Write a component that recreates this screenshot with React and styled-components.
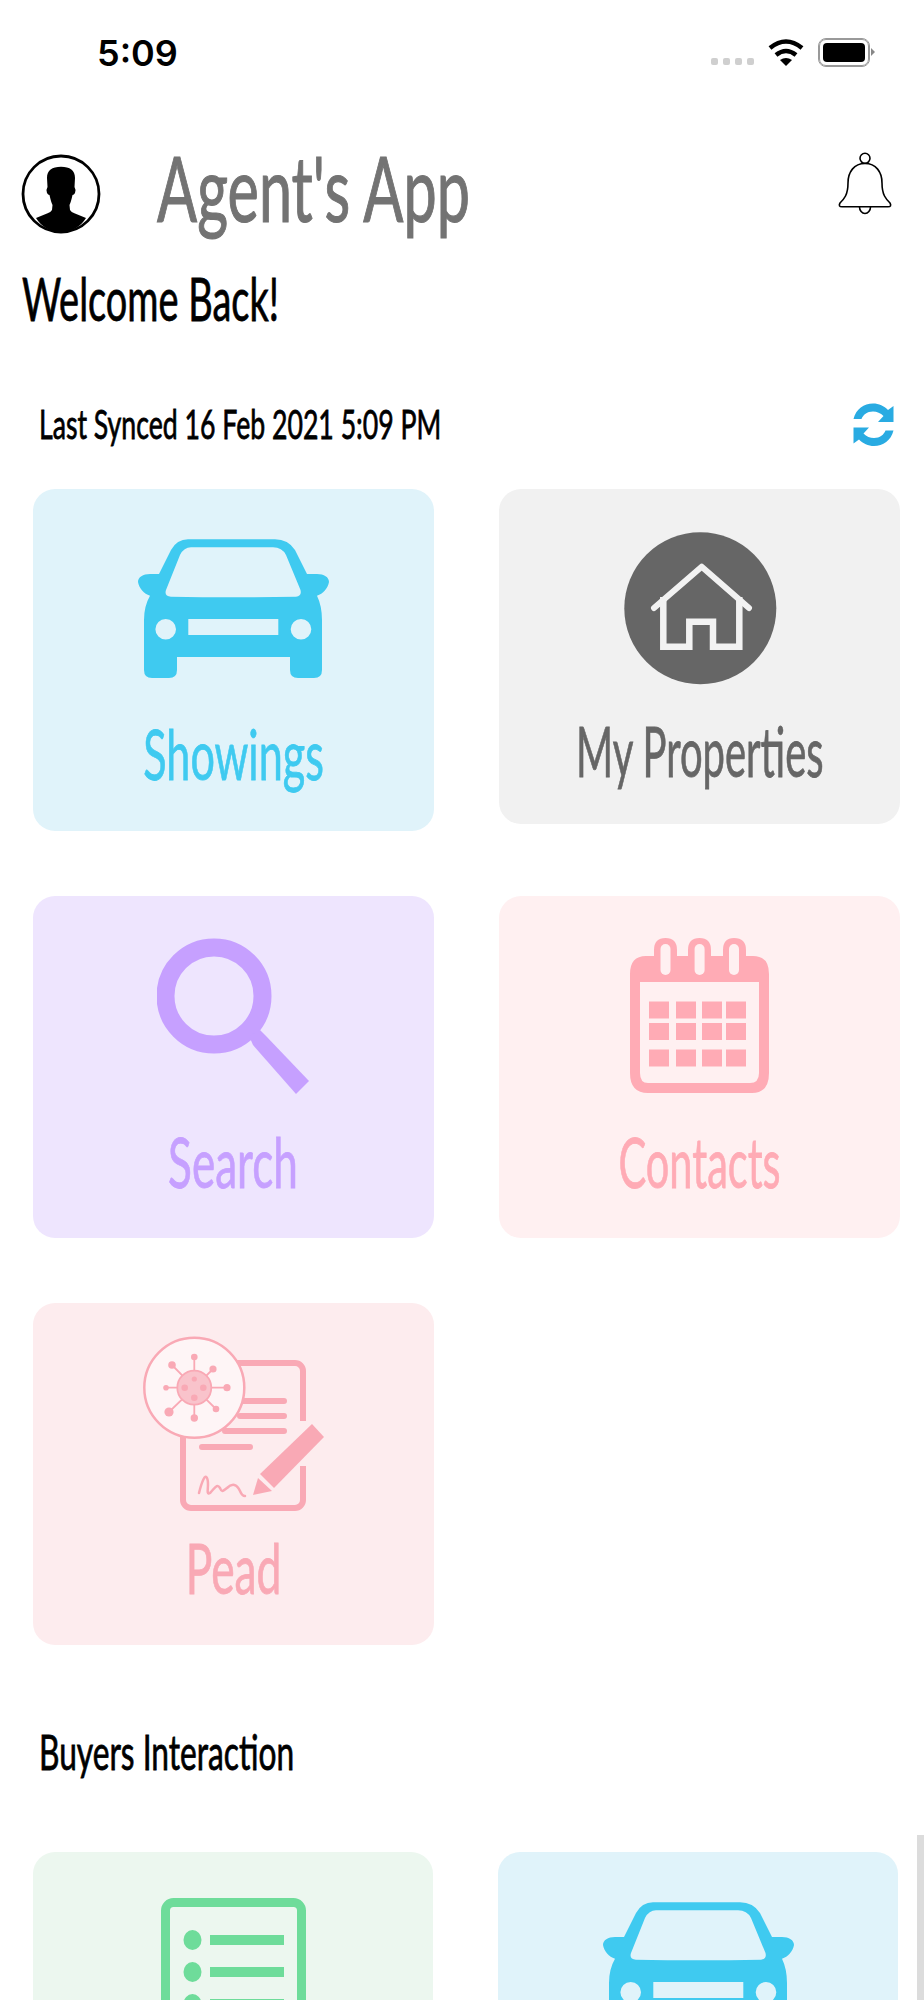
import React from 'react';
import styled, { createGlobalStyle } from 'styled-components';

const GlobalStyle = createGlobalStyle`
  html, body {
    margin: 0;
    padding: 0;
    background: #fff;
    overflow: hidden;
    font-family: "Lato", "Liberation Sans", sans-serif;
  }
`;

const Screen = styled.div`
  position: relative;
  width: 924px;
  height: 2000px;
  overflow: hidden;
  background: #fff;
`;

const StatusBar = styled.div`
  height: 153px;
  box-sizing: border-box;
  padding: 35px 51px 0 97px;
  display: flex;
  justify-content: space-between;
  align-items: flex-start;
`;

const Clock = styled.span`
  font-family: "Inter", "Liberation Sans", sans-serif;
  font-size: 36px;
  line-height: 36px;
  font-weight: 600;
  color: #000;
`;

const StatusIcons = styled.div`
  display: flex;
  align-items: flex-start;
  padding-top: 4px;
`;

const SignalDots = styled.div`
  display: flex;
  gap: 5px;
  margin: 19px 14px 0 0;
`;

const SignalDot = styled.span`
  width: 7px;
  height: 7px;
  border-radius: 2px;
  background: #cfcfcf;
`;

const Wifi = styled.svg`
  width: 36px;
  height: 27px;
  margin-right: 15px;
`;

const BatteryShell = styled.div`
  position: relative;
  width: 50px;
  height: 27px;
  box-sizing: border-box;
  padding: 3px;
  border: 1px solid #999;
  outline: 1px solid #999;
  border-radius: 7px;
  margin-right: 4px;
  &::after {
    content: "";
    position: absolute;
    right: -7px;
    top: 8px;
    border-left: 4px solid #888;
    border-top: 4px solid transparent;
    border-bottom: 4px solid transparent;
  }
`;

const BatteryFill = styled.div`
  width: 100%;
  height: 100%;
  background: #000;
  border-radius: 4px;
`;

const Header = styled.div`
  height: 82px;
  padding: 0 33px 0 22px;
  display: flex;
  align-items: center;
`;

const Avatar = styled.svg`
  width: 100px;
  height: 100px;
  flex: none;
  margin: -7px -14px -9px -7px;
`;

// the reference font is a narrow geometric face, so squeeze Lato sideways
const Squeezed = styled.span`
  display: inline-block;
  white-space: nowrap;
  font-size: ${(p) => p.$size}px;
  line-height: ${(p) => p.$size}px;
  color: ${(p) => p.$color || '#000'};
  -webkit-text-stroke: ${(p) => p.$stroke || 0.8}px ${(p) => p.$color || '#000'};
  transform: scaleX(${(p) => p.$squeeze});
  transform-origin: ${(p) => p.$origin || 'left center'};
`;

const TitleSlot = styled.div`
  flex: 1;
  margin-left: 56px;
  margin-top: -14px;
`;

const Bell = styled.svg`
  width: 80px;
  height: 80px;
  flex: none;
  margin: -18px -14px 0 0;
`;

const Welcome = styled.div`
  height: 72px;
  margin-top: 27px;
  padding-left: 22px;
  display: flex;
  align-items: center;
`;

const SyncRow = styled.div`
  height: 46px;
  margin-top: 66px;
  padding: 0 14px 0 39px;
  display: flex;
  align-items: center;
  justify-content: space-between;
`;

const SyncIcon = styled.svg`
  width: 70px;
  height: 60px;
  flex: none;
  margin-top: 4px;
`;

const Grid = styled.div`
  display: grid;
  grid-template-columns: ${(p) => p.$col}px ${(p) => p.$col}px;
  column-gap: ${(p) => p.$gap}px;
  row-gap: 65px;
  align-items: start;
  padding-left: 33px;
  margin-top: ${(p) => p.$top}px;
`;

const Card = styled.div`
  height: ${(p) => p.$height || 342}px;
  border-radius: 22px;
  background: ${(p) => p.$bg};
  display: flex;
  flex-direction: column;
  align-items: center;
  overflow: hidden;
`;

const IconBox = styled.div`
  height: ${(p) => p.$height}px;
  margin-top: ${(p) => p.$top}px;
  display: flex;
  justify-content: center;
  transform: translateX(${(p) => p.$shift || 0}px);
`;

const LabelBox = styled.div`
  height: 70px;
  margin-top: ${(p) => p.$gap}px;
  display: flex;
  justify-content: center;
  align-items: center;
`;

const SectionTitle = styled.div`
  height: 50px;
  margin-top: 82px;
  padding-left: 39px;
  display: flex;
  align-items: center;
`;

const ScrollThumb = styled.div`
  position: absolute;
  right: 0;
  top: 1835px;
  bottom: 0;
  width: 7px;
  background: #dcdcdc;
`;

const CarIcon = () => (
  <svg width="216" height="160" viewBox="0 0 216 160">
    <path
      fill="#3fcaf0"
      fillRule="evenodd"
      d="M63 9.3H150Q163 9.3 170 20L182 44H192C199 44 204 47 204 52C203 58 198 64 192 65.7Q197 76 197 90V140Q197 148 189 148H173Q165 148 165 140V127H52V140Q52 148 44 148H27Q19 148 19 140V90Q19 76 25 65.7C19 64 14 58 13 52C13 47 18 44 25 44H34L46 20Q52 9.3 63 9.3ZM66 17.3Q59 17.3 55 25L41 60Q39 66 46 66.7Q108 68 171 66.7Q177 66 175.5 60L161 25Q157 17.3 148 17.3ZM63.3 89V105H153.3V89ZM40.7 89A10.3 10.3 0 1 0 40.7 109.6A10.3 10.3 0 1 0 40.7 89ZM176 89A10.3 10.3 0 1 0 176 109.6A10.3 10.3 0 1 0 176 89Z"
    />
  </svg>
);

const HouseIcon = () => (
  <svg width="160" height="165" viewBox="0 0 160 165">
    <circle cx="80.3" cy="83.3" r="76" fill="#666" />
    <path d="M34 83L81.7 41.7L129 83" fill="none" stroke="#f2f2f2" strokeWidth="6" strokeLinecap="round" strokeLinejoin="round" />
    <path d="M43.3 72V121.7H69.3V96.7H93V121.7H119.3V72" fill="none" stroke="#f2f2f2" strokeWidth="6.5" />
  </svg>
);

const SearchIcon = () => (
  <svg width="153" height="157" viewBox="0 0 153 157">
    <circle cx="57" cy="58" r="48.5" fill="none" stroke="#c6a0ff" strokeWidth="18" />
    <path d="M92 98L103 92L109 98L152 143L139 156L96 107Z" fill="#c6a0ff" />
  </svg>
);

const CalendarIcon = () => {
  const slots = [35.5, 69.6, 104];
  const cols = [19, 46, 72, 96];
  const rows = [63.5, 85, 111.5];
  return (
    <svg width="139" height="155" viewBox="0 0 139 155">
      <path
        fill="#ffabb5"
        fillRule="evenodd"
        d="M16 18H24V12Q24 0 35.5 0Q47 0 47 12V18H58V12Q58 0 69.5 0Q81 0 81 12V18H93V12Q93 0 104 0Q116 0 116 12V18H123Q139 18 139 36V135Q139 155 122 155H18Q0 155 0 135V36Q0 18 16 18ZM10 44V135Q10 145 18 145H120Q129 145 129 135V44Z"
      />
      {slots.map((x) => (
        <rect key={x} x={x - 5} y="6" width="10" height="31" rx="5" fill="#fff0f1" />
      ))}
      {rows.map((y) =>
        cols.map((x) => <rect key={`${x}-${y}`} x={x} y={y} width="20" height="17" fill="#ffabb5" />)
      )}
    </svg>
  );
};

const PeadIcon = () => {
  const c = '#f9a9b5';
  const spokes = [
    [74.3, 36, 3.3], [107, 66.7, 3.6], [74.3, 97, 3.7], [46, 66.7, 2.8],
    [52, 44, 3.8], [93, 48, 3.6], [96, 88, 3.3], [49, 91, 4.6],
  ];
  return (
    <svg width="220" height="200" viewBox="0 0 220 200">
      <rect x="63" y="42" width="120" height="145" rx="8" fill="none" stroke={c} strokeWidth="6" />
      <rect x="170" y="100" width="20" height="45" fill="#fdecee" />
      <g stroke={c} strokeWidth="6" strokeLinecap="round">
        <path d="M120 80H164M120 95H164M105 110H164M82 126H130" />
      </g>
      <path d="M192 103L204 116L154 167L140 153Z" fill={c} />
      <path d="M133 174L138 157L152 170Z" fill={c} />
      <path
        d="M79 172C82 160 85 153 87 157C90 163 85 175 90 172C95 167 97 162 100 167C102 172 103 170 107 167C112 162 117 163 120 170Q122 175 125 175"
        fill="none"
        stroke={c}
        strokeWidth="2.5"
        strokeLinecap="round"
      />
      <circle cx="74.3" cy="66.7" r="50" fill="#fef5f6" stroke={c} strokeWidth="2.5" />
      {spokes.map(([x, y, r]) => (
        <g key={`${x}-${y}`}>
          <line x1="74.3" y1="66.7" x2={x} y2={y} stroke={c} strokeWidth="1.8" />
          <circle cx={x} cy={y} r={r} fill={c} />
        </g>
      ))}
      <circle cx="74.3" cy="66.7" r="17" fill="#f9c3cb" stroke={c} strokeWidth="1.8" />
      <circle cx="74.3" cy="58" r="2.6" fill={c} />
      <circle cx="64.7" cy="66.7" r="3.3" fill={c} />
      <circle cx="83.3" cy="66.7" r="3.3" fill={c} />
      <circle cx="74.3" cy="76.7" r="3.3" fill={c} />
    </svg>
  );
};

const ChecklistIcon = () => {
  const rows = [42, 74, 106];
  return (
    <svg width="145" height="170" viewBox="0 0 145 170">
      <rect x="4.5" y="4.5" width="136" height="170" rx="8" fill="none" stroke="#6edc9a" strokeWidth="9" />
      {rows.map((y) => (
        <g key={y} fill="#6edc9a">
          <ellipse cx="31.5" cy={y} rx="9" ry="10" />
          <rect x="49" y={y - 5} width="74" height="10" />
        </g>
      ))}
    </svg>
  );
};

const cards = [
  { label: 'Showings', bg: '#e0f3fa', color: '#3fcaf0', squeeze: 0.616, icon: <CarIcon />, top: 41, h: 160, gap: 28, shift: -1 },
  { label: 'My Properties', bg: '#f1f1f1', color: '#666', squeeze: 0.571, icon: <HouseIcon />, top: 36, h: 165, gap: 25, height: 335 },
  { label: 'Search', bg: '#eee5fe', color: '#c6a0ff', squeeze: 0.63, icon: <SearchIcon />, top: 42, h: 157, gap: 31 },
  { label: 'Contacts', bg: '#fff0f1', color: '#ffabb5', squeeze: 0.594, icon: <CalendarIcon />, top: 42, h: 155, gap: 33 },
  { label: 'Pead', bg: '#fdecee', color: '#f9a9b5', squeeze: 0.634, icon: <PeadIcon />, top: 18, h: 200, gap: 11, shift: -4 },
];

const buyers = [
  { label: 'Checklist', bg: '#ecf7ef', icon: <ChecklistIcon />, top: 46, h: 170 },
  { label: 'Showings', bg: '#e0f3fa', icon: <CarIcon />, top: 41, h: 160 },
];

const App = () => {
  return (
    <Screen>
      <GlobalStyle />
      <StatusBar>
        <Clock>5:09</Clock>
        <StatusIcons>
          <SignalDots>
            <SignalDot />
            <SignalDot />
            <SignalDot />
            <SignalDot />
          </SignalDots>
          <Wifi viewBox="0 0 36 27">
            <path d="M2 9Q18 -4 34 9" fill="none" stroke="#000" strokeWidth="4.5" />
            <path d="M8 16Q18 8 28 16" fill="none" stroke="#000" strokeWidth="4.5" />
            <path d="M12 21Q18 17 24 21L18 27Z" fill="#000" />
          </Wifi>
          <BatteryShell>
            <BatteryFill />
          </BatteryShell>
        </StatusIcons>
      </StatusBar>

      <Header>
        <Avatar viewBox="0 0 100 100">
          <circle cx="46" cy="49" r="38" fill="#fff" stroke="#000" strokeWidth="2.8" />
          <path d="M46 21.7C55 21.7 60 25 60 33L59.5 42Q61 44 60 48Q59 50 57.5 50Q56 57 54.5 60L55 65Q56 67 60 68.5L71 73Q63 86 46 87.5Q29 86 21 73L32 68.5Q36 67 37 65L37.5 60Q36 57 34.5 50Q33 50 32 48Q31 44 32.5 42L32 33C32 25 37 21.7 46 21.7Z" />
        </Avatar>
        <TitleSlot>
          <Squeezed $size={92} $color="#737373" $squeeze={0.645} $stroke={1.2}>Agent's App</Squeezed>
        </TitleSlot>
        <Bell viewBox="0 0 80 80">
          <circle cx="40" cy="13.3" r="5" fill="none" stroke="#000" strokeWidth="1.6" />
          <path d="M40 18.5C29 18.5 23 27 23 38C23 50 19 54 15 58Q13 61.7 17 61.7H63Q67 61.7 65 58C61 54 57 50 57 38C57 27 51 18.5 40 18.5Z" fill="none" stroke="#000" strokeWidth="1.6" />
          <path d="M34.5 62A5.5 6.5 0 0 0 45.5 62" fill="none" stroke="#000" strokeWidth="1.6" />
        </Bell>
      </Header>

      <Welcome>
        <Squeezed $size={60} $squeeze={0.632}>Welcome Back!</Squeezed>
      </Welcome>

      <SyncRow>
        <Squeezed $size={41} $squeeze={0.65}>Last Synced 16 Feb 2021 5:09 PM</Squeezed>
        <SyncIcon viewBox="0 0 70 60">
          <g fill="#29abe2">
            <path d="M13.5 24C16 14 24 8.5 33 8.5C39 8.5 44 11 48 15L53.5 11V27H38L43.5 21C40.5 18 37 16.5 33 16.5C27 16.5 23 20 21.5 24Z" />
            <path transform="rotate(180 33.5 29.7)" d="M13.5 24C16 14 24 8.5 33 8.5C39 8.5 44 11 48 15L53.5 11V27H38L43.5 21C40.5 18 37 16.5 33 16.5C27 16.5 23 20 21.5 24Z" />
          </g>
        </SyncIcon>
      </SyncRow>

      <Grid $col={401} $gap={65} $top={43}>
        {cards.map((c) => (
          <Card key={c.label} $bg={c.bg} $height={c.height}>
            <IconBox $top={c.top} $height={c.h} $shift={c.shift}>{c.icon}</IconBox>
            <LabelBox $gap={c.gap}>
              <Squeezed $size={70} $color={c.color} $squeeze={c.squeeze} $origin="center center">{c.label}</Squeezed>
            </LabelBox>
          </Card>
        ))}
      </Grid>

      <SectionTitle>
        <Squeezed $size={48} $squeeze={0.66}>Buyers Interaction</Squeezed>
      </SectionTitle>

      <Grid $col={400} $gap={65} $top={75}>
        {buyers.map((c) => (
          <Card key={c.label} $bg={c.bg}>
            <IconBox $top={c.top} $height={c.h}>{c.icon}</IconBox>
          </Card>
        ))}
      </Grid>

      <ScrollThumb />
    </Screen>
  );
};

export default App;
